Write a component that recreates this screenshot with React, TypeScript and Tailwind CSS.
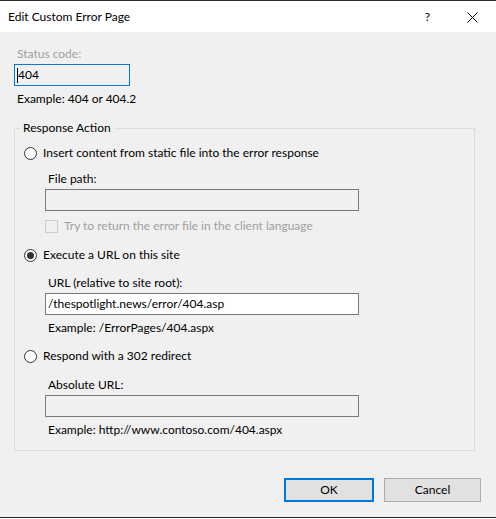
import React from "react";

function Radio({ checked, label }: { checked?: boolean; label: string }) {
  return (
    <div className="flex items-center h-[16px] gap-[6px]">
      <span className="w-[13px] h-[13px] rounded-full border border-[#333333] bg-white flex items-center justify-center shrink-0">
        {checked && <span className="w-[7px] h-[7px] rounded-full bg-[#333333]" />}
      </span>
      <span className="whitespace-nowrap">{label}</span>
    </div>
  );
}

export default function App() {
  return (
    <div className="w-[496px] h-[519px] bg-white">
      <div className="h-[518px] border-y border-[#2b2b2b] bg-[#f0f0f0] flex flex-col text-[12px] leading-[16px] text-black font-['Lato',sans-serif]">
        <div className="h-[31px] shrink-0 bg-white flex items-center pl-[8px] pt-[1px]">
          <span className="whitespace-nowrap">Edit Custom Error Page</span>
          <span className="ml-auto mr-[37px] text-[12px]">?</span>
          <svg width="11" height="11" viewBox="0 0 11 11" className="mr-[18px]">
            <path d="M0.5 0.5 L10.5 10.5 M10.5 0.5 L0.5 10.5" stroke="#000" strokeWidth="1" fill="none" />
          </svg>
        </div>

        <div className="pl-[14px] flex flex-col">
          <div className="mt-[14px] pl-[3px] text-[#a0a0a0]">Status code:</div>
          <div className="mt-[2px] w-[116px] h-[22px] border border-[#0078d7] flex items-center pl-[2px]">
            <span className="w-px h-[15px] bg-black" />
            <span>404</span>
          </div>
          <div className="mt-[5px] pl-[3px]">Example: 404 or 404.2</div>

          <fieldset className="mt-[13px] w-[461px] border border-[#dcdcdc] pb-[12px] min-w-0">
            <legend className="ml-[5px] px-[3px] leading-[16px]">Response Action</legend>
            <div className="pl-[9px] flex flex-col">
              <div className="mt-[9px]">
                <Radio label="Insert content from static file into the error response" />
              </div>
              <div className="ml-[21px] flex flex-col">
                <div className="mt-[10px] pl-[3px]">File path:</div>
                <div className="mt-[2px] w-[314px] h-[22px] border border-[#7a7a7a] bg-[#f0f0f0]" />
                <div className="mt-[7px] flex items-center h-[16px] gap-[6px] text-[#a0a0a0]">
                  <span className="w-[13px] h-[13px] border border-[#cccccc] bg-[#f0f0f0] shrink-0" />
                  <span className="whitespace-nowrap">Try to return the error file in the client language</span>
                </div>
              </div>

              <div className="mt-[13px]">
                <Radio checked label="Execute a URL on this site" />
              </div>
              <div className="ml-[21px] flex flex-col">
                <div className="mt-[12px] pl-[3px]">URL (relative to site root):</div>
                <div className="mt-[2px] w-[314px] h-[22px] border border-[#7a7a7a] bg-white flex items-center pl-[2px]">
                  /thespotlight.news/error/404.asp
                </div>
                <div className="mt-[5px] pl-[3px]">Example: /ErrorPages/404.aspx</div>
              </div>

              <div className="mt-[12px]">
                <Radio label="Respond with a 302 redirect" />
              </div>
              <div className="ml-[21px] flex flex-col">
                <div className="mt-[13px] pl-[3px]">Absolute URL:</div>
                <div className="mt-[2px] w-[314px] h-[22px] border border-[#7a7a7a] bg-[#f0f0f0]" />
                <div className="mt-[5px] pl-[3px]">Example: http://www.contoso.com/404.aspx</div>
              </div>
            </div>
          </fieldset>
        </div>

        <div className="mt-[27px] flex justify-end pr-[15px] gap-[10px]">
          <button className="w-[90px] h-[24px] border-2 border-[#0078d7] bg-[#e1e1e1] flex items-center justify-center">
            OK
          </button>
          <button className="w-[97px] h-[24px] border border-[#adadad] bg-[#e1e1e1] flex items-center justify-center">
            Cancel
          </button>
        </div>
      </div>
    </div>
  );
}
